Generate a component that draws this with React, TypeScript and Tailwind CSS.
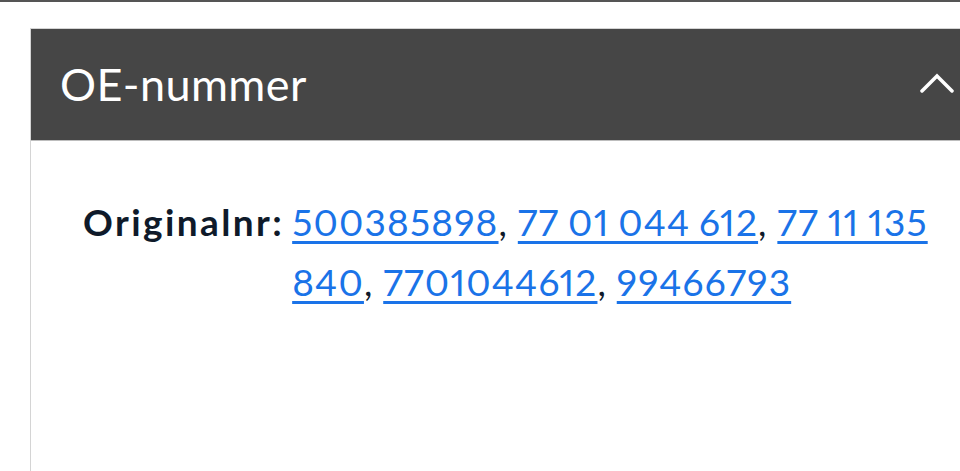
const numbers = ["500385898", "77 01 044 612", "77 11 135 840", "7701044612", "99466793"];

export default function App() {
  return (
    <div className="min-h-[471px] bg-white border-t-2 border-[#555555] font-['Lato',sans-serif] overflow-hidden">
      <div className="pt-[26px] pl-[30px]">
        <section className="border-l border-t border-[#d4d4d4] min-h-[450px]">
          {/* Header */}
          <div className="h-[112px] bg-[#464646] border-b border-[#bdbdbd] flex items-center justify-between pl-[29px] pr-[6px]">
            <h2 className="text-white text-[45px] font-normal tracking-[0.4px]">OE-nummer</h2>
            <svg width="34" height="22" viewBox="0 0 34 22" fill="none" stroke="white" strokeWidth="3.5" strokeLinecap="round" className="mb-[4px]">
              <path d="M2 19 L17 4 L32 19" />
            </svg>
          </div>

          {/* Body */}
          <div className="flex pt-[51px] pl-[52px] pr-[12px] text-[37px] leading-[60px]">
            <span className="font-bold text-[#0f1a2a] tracking-[2.4px] shrink-0 mr-[8px]">Originalnr:</span>
            <p className="text-[#0f1a2a] tracking-[1.2px] proportional-nums [word-spacing:-1px]">
              {numbers.map((n, i) => (
                <span key={n}>
                  <a href="#" className="text-[#1a73e8] underline decoration-[3px] underline-offset-[5px] [word-spacing:-2px]">
                    {n}
                  </a>
                  {i < numbers.length - 1 && ", "}
                </span>
              ))}
            </p>
          </div>
        </section>
      </div>
    </div>
  );
}
